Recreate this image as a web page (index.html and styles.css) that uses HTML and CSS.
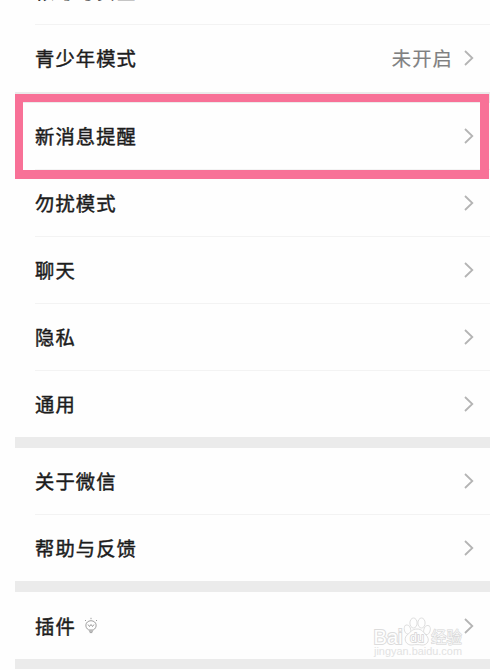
FILE: index.html
```html
<!DOCTYPE html>
<html lang="zh-CN">
<head>
<meta charset="utf-8">
<title>设置</title>
<link rel="stylesheet" href="styles.css">
</head>
<body>
<svg class="defs" width="0" height="0">
  <symbol id="chevron" viewBox="0 0 10 16"><path d="M1 1 L8.3 8 L1 15" fill="none" stroke="currentColor" stroke-width="1.8"/></symbol>
</svg>
<main class="settings">
  <section class="group first">
    <div class="row"><span class="label">帐号与安全</span><svg class="chevron"><use href="#chevron"/></svg></div>
    <div class="row"><span class="label">青少年模式</span><span class="value">未开启</span><svg class="chevron"><use href="#chevron"/></svg></div>
  </section>
  <section class="group">
    <div class="row"><span class="label">新消息提醒</span><svg class="chevron"><use href="#chevron"/></svg><div class="highlight"></div></div>
    <div class="row"><span class="label">勿扰模式</span><svg class="chevron"><use href="#chevron"/></svg></div>
    <div class="row"><span class="label">聊天</span><svg class="chevron"><use href="#chevron"/></svg></div>
    <div class="row"><span class="label">隐私</span><svg class="chevron"><use href="#chevron"/></svg></div>
    <div class="row"><span class="label">通用</span><svg class="chevron"><use href="#chevron"/></svg></div>
  </section>
  <section class="group">
    <div class="row"><span class="label">关于微信</span><svg class="chevron"><use href="#chevron"/></svg></div>
    <div class="row"><span class="label">帮助与反馈</span><svg class="chevron"><use href="#chevron"/></svg></div>
  </section>
  <section class="group last">
    <div class="row">
      <span class="label">插件</span>
      <svg class="bulb" viewBox="0 0 14 17" fill="none" stroke="#858585" stroke-width=".8">
        <path d="M4.800 13C.4 10.800 .8 4 7 3.700C13.200 4 13.600 10.800 9.200 13Z"/>
        <path d="M5 14.200H9M5.700 15.600H8.300M4 7.500L5.500 9.500L7 7.500L8.500 9.500L10 7.500M7 .8V2.200M1 3L2 4M13 3L12 4"/>
      </svg>
      <svg class="chevron"><use href="#chevron"/></svg>
    </div>
    <svg class="watermark" viewBox="0 0 94 46">
      <text class="brand" x="2.500" y="36.500" textLength="29" lengthAdjust="spacingAndGlyphs">Bai</text>
      <text class="brand cjk" x="60" y="36" textLength="31" lengthAdjust="spacingAndGlyphs">经验</text>
      <g class="outline">
        <ellipse cx="36.500" cy="22.500" rx="3.200" ry="4.600" transform="rotate(-15 36.500 22.500)"/>
        <ellipse cx="42.500" cy="16" rx="3.600" ry="5"/>
        <ellipse cx="50.500" cy="16" rx="3.600" ry="5"/>
        <ellipse cx="56" cy="23" rx="3.200" ry="4.600" transform="rotate(15 56 23)"/>
        <path d="M46 22C51 22 52 25 55 28C60 33 56 38.500 51 38C48 37.500 44 37.500 41 38C35 38.500 32 32 36 28C40 25 41 22 46 22Z"/>
      </g>
      <text class="du" x="39" y="35" textLength="14" lengthAdjust="spacingAndGlyphs">du</text>
      <text class="site" x="3" y="47.500" textLength="88" lengthAdjust="spacingAndGlyphs">jingyan.baidu.com</text>
    </svg>
  </section>
</main>
</body>
</html>
```
FILE: styles.css
```css
body {
  margin: 0;
  height: 670px;
  overflow: hidden;
  background: #fefefe;
  font-family: "Noto Sans CJK SC", sans-serif;
}
.defs { position: absolute; }
.settings {
  margin: -42px 0 0 15px;
  display: flow-root;
}
.group {
  border-bottom: 11px solid #ebebeb;
  padding-left: 20px;
}
.group.last {
  position: relative;
  border-bottom-width: 10px;
}
.row {
  position: relative;
  display: flex;
  align-items: center;
  box-sizing: border-box;
  height: 67px;
  padding-right: 16px;
  border-bottom: 1px solid #f3f3f3;
}
.row:last-child { border-bottom-color: transparent; }
.group:not(.first) .row:last-child { height: 66px; }
.group.last .row.row { height: 67px; border-bottom: 0; }
.label {
  color: #1c1c1c;
  font-size: 19.300px;
  font-weight: 400;
  letter-spacing: 1.100px;
  line-height: 28px;
  -webkit-text-stroke: .45px #1c1c1c;
}
.value {
  margin-left: auto;
  margin-right: 11px;
  color: #808080;
  font-size: 19.300px;
  letter-spacing: 1.100px;
  line-height: 28px;
  -webkit-text-stroke: .2px #808080;
}
.chevron {
  width: 10px;
  height: 16px;
  margin-left: auto;
  color: #b4b4b4;
}
.value + .chevron { margin-left: 0; }
.highlight {
  position: absolute;
  left: -20px;
  top: -9px;
  width: 474px;
  height: 85px;
  box-sizing: border-box;
  border: solid #f87197;
  border-width: 8px 9px 9px 8px;
}
.bulb {
  width: 14px;
  height: 17px;
  margin-left: 8px;
}
.watermark {
  position: absolute;
  left: 356px;
  top: 15px;
  width: 94px;
  height: 46px;
  overflow: visible;
}
.outline {
  fill: #fefefe;
  stroke: #dedede;
  stroke-width: 1;
}
.brand {
  fill: #fefefe;
  stroke: #dcdcdc;
  stroke-width: 2;
  paint-order: stroke;
  font: 400 20px "Liberation Sans", sans-serif;
}
.brand.cjk {
  fill: #f4f4f4;
  stroke: #d4d4d4;
  stroke-width: 1;
  font: 400 16px "Noto Sans CJK SC", sans-serif;
}
.du {
  fill: #fefefe;
  stroke: #d2d2d2;
  stroke-width: 1.500;
  paint-order: stroke;
  font: 400 13px "Liberation Sans", sans-serif;
}
.site {
  fill: #e2e2e2;
  font: 10px "Liberation Sans", sans-serif;
}
```
